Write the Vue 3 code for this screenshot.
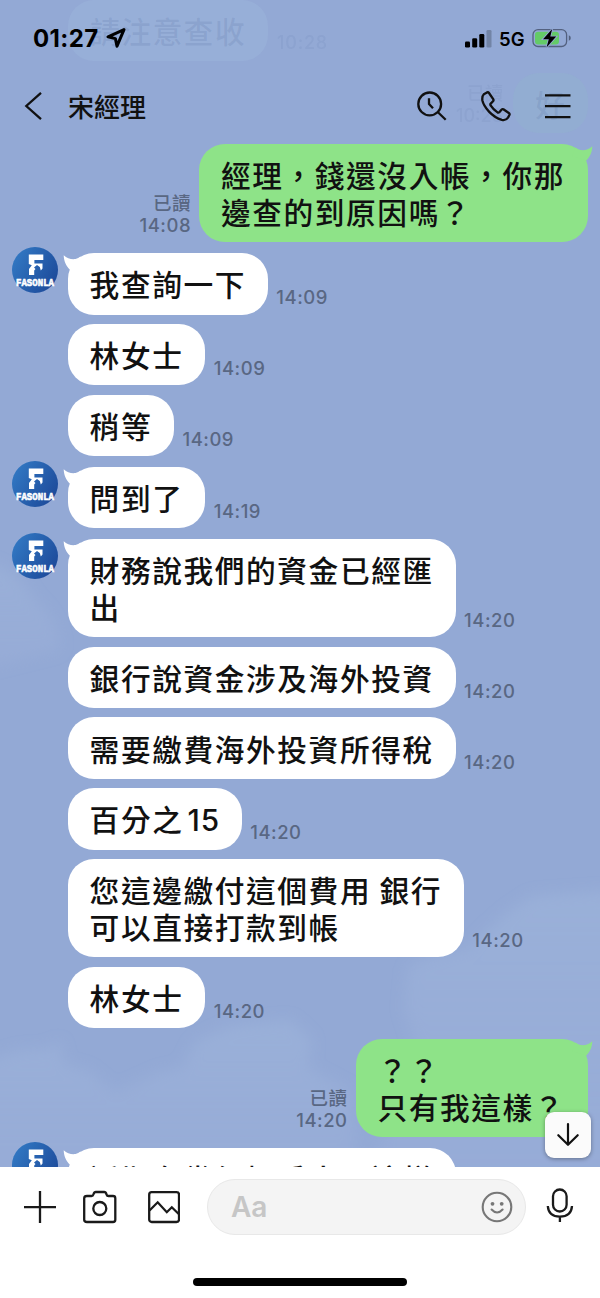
<script setup>
const messages = [
  { side: 'out', lines: ['經理，錢還沒入帳，你那', '邊查的到原因嗎？'], time: '14:08', first: true },
  { side: 'in', lines: ['我查詢一下'], time: '14:09', first: true },
  { side: 'in', lines: ['林女士'], time: '14:09' },
  { side: 'in', lines: ['稍等'], time: '14:09' },
  { side: 'in', lines: ['問到了'], time: '14:19', first: true },
  { side: 'in', lines: ['財務說我們的資金已經匯', '出'], time: '14:20', first: true },
  { side: 'in', lines: ['銀行說資金涉及海外投資'], time: '14:20' },
  { side: 'in', lines: ['需要繳費海外投資所得稅'], time: '14:20' },
  { side: 'in', lines: ['百分之'], digits: '15', time: '14:20' },
  { side: 'in', lines: ['您這邊繳付這個費用 銀行', '可以直接打款到帳'], time: '14:20' },
  { side: 'in', lines: ['林女士'], time: '14:20' },
  { side: 'out', lines: ['？？', '只有我這樣？'], time: '14:20', first: true },
  { side: 'in', lines: ['近期有幾個提手出現這樣'], time: '', first: true },
]
</script>

<template>
  <div class="screen">
    <svg class="sky" viewBox="0 0 600 1167" aria-hidden="true">
      <defs>
        <filter id="soft" x="-20%" y="-20%" width="140%" height="140%"><feGaussianBlur stdDeviation="7" /></filter>
        <linearGradient id="haze" x1="0" y1="0" x2="0" y2="1">
          <stop offset="0" stop-color="#a0b7dc" stop-opacity=".5" />
          <stop offset="1" stop-color="#a0b2dc" stop-opacity=".25" />
        </linearGradient>
      </defs>
      <g filter="url(#soft)" fill="url(#haze)">
        <path d="M-20 1062 L20 1050 L48 1049 L60 1041 L64 1064 L88 1070 L115 1092 L160 1072 L182 1068 L195 1042 L230 1026 L290 1020 L312 1040 L308 1068 L350 1090 L360 1190 H-20Z" />
        <path d="M408 968 L425 958 L470 948 L490 928 L508 912 L532 896 L620 890 V1190 H360 L420 1060 L404 1010Z" />
        <path d="M-20 560 Q20 570 35 600 Q60 620 60 650 L-20 670Z" />
      </g>
    </svg>

    <header class="header">
      <div class="ghost ghost-in">請注意查收</div>
      <div class="ghost ghost-in-time">10:28</div>
      <div class="ghost ghost-meta">已讀<br />10:28</div>
      <div class="ghost ghost-out">好</div>

      <div class="status">
        <span class="clock">01:27</span>
        <svg class="locate" width="22" height="22" viewBox="0 0 22 22">
          <path d="M19 2.6 L3 9.8 L10.4 11.6 L12 19.2 Z" fill="none" stroke="#000" stroke-width="3" stroke-linejoin="round" />
        </svg>
        <svg class="signal" width="27" height="18" viewBox="0 0 27 18">
          <rect x="0" y="11.4" width="5" height="6.2" rx="1.3" />
          <rect x="7.2" y="8.3" width="5" height="9.3" rx="1.3" />
          <rect x="14.3" y="4" width="5" height="13.6" rx="1.3" />
          <rect x="21.5" y="0" width="5" height="17.6" rx="1.3" opacity=".22" />
        </svg>
        <span class="network">5G</span>
        <svg class="battery" width="40" height="22" viewBox="0 0 40 22">
          <rect x="1" y="2.7" width="33.6" height="16.8" rx="5" fill="none" stroke="#53617f" stroke-width="1.3" />
          <path d="M36.8 8.2 Q38.8 9 38.8 11 Q38.8 13 36.8 13.8Z" fill="#53617f" />
          <rect x="3" y="4.7" width="24" height="12.8" rx="3.2" fill="#64cb67" />
          <path d="M20.2 2 L11 12.2 H16.8 L14.5 20.4 L24.2 9.6 H18.3Z" fill="#000" stroke="#93a9d5" stroke-width="1.8" paint-order="stroke" />
        </svg>
      </div>

      <div class="nav">
        <svg class="back" width="19" height="30" viewBox="0 0 19 30">
          <path d="M17 1.8 L2.3 15 L17 28.2" fill="none" stroke="#111" stroke-width="2.3" />
        </svg>
        <h1 class="title">宋經理</h1>
        <svg class="act search" width="30" height="30" viewBox="0 0 30 30">
          <circle cx="12.7" cy="12.9" r="11.4" />
          <path d="M12 7.2 V13 L16 17.2 M20.7 21 L28.7 28.8" />
        </svg>
        <svg class="act phone" width="30" height="31" viewBox="0 0 30 31">
          <path d="M2.8 3.3 L6 1.4 Q7.2.8 8 2 L12.2 8.2 Q12.9 9.3 12 10.2 L9.5 12.9 Q9.1 13.6 9.6 14.4 Q12.3 18.6 16.5 21.4 Q17.5 22 18.3 21.2 L20.7 18.5 Q21.4 17.8 22.4 18.3 L27.8 22 Q29 22.8 28.4 24 L27 26.6 Q24.8 29.8 20.8 28.8 Q13.8 26.8 8 20.6 Q2.4 14.4 1.4 9.5 Q.8 5.4 2.8 3.3Z" />
        </svg>
        <svg class="act menu" width="26" height="26" viewBox="0 0 26 26">
          <path d="M0 2.3 H25.5 M0 13.2 H25.5 M0 24.2 H25.5" />
        </svg>
      </div>
    </header>

    <main class="chat">
      <div v-for="(m, i) in messages" :key="i" class="row" :class="[m.side, { first: m.first }]">
        <div v-if="m.side === 'in'" class="gutter">
          <svg v-if="m.first" class="avatar" width="46" height="46" viewBox="0 0 46 46">
            <defs>
              <linearGradient id="disc" x1="0" y1=".2" x2="1" y2=".8">
                <stop offset="0" stop-color="#3279c4" />
                <stop offset="1" stop-color="#1c4898" />
              </linearGradient>
            </defs>
            <circle cx="23" cy="23" r="23" fill="url(#disc)" />
            <path d="M16.8 7.5 H31.3 V13 H22.4 V16.4 H30.5 V21.5 L28.8 23.5 L27.8 20 L25 18 L22 20.5 L23.5 22 L22.2 23.5 V28 H17 V22 L19.8 18.2 L16.8 17Z" fill="#fff" />
            <text x="23" y="38.5" text-anchor="middle" textLength="38" lengthAdjust="spacingAndGlyphs" class="brand">FASONLA</text>
          </svg>
        </div>
        <div v-else class="meta out-meta"><span>已讀</span><span>{{ m.time }}</span></div>
        <div class="bubble">
          <svg v-if="m.first" class="tail" width="22" height="20" viewBox="0 0 22 20">
            <path d="M.7 2.2 C4 5.5 8.5 6.6 12.6 6 C14.5 5.6 16 4.6 17.5 3.6 L21 12 L6.6 16.5 C3.2 12.5 .9 8.5 .7 2.2Z" />
          </svg>
          <div v-for="l in m.lines" :key="l" class="line">{{ l }}<span v-if="m.digits" class="digits">{{ m.digits }}</span></div>
        </div>
        <div v-if="m.side === 'in'" class="meta">{{ m.time }}</div>
      </div>
      <button class="jump" type="button">
        <svg width="24" height="26" viewBox="0 0 24 26">
          <path d="M12 2 V22.5 M2.3 13.2 L12 22.8 L21.7 13.2" fill="none" stroke="#111" stroke-width="2.2" stroke-linecap="round" stroke-linejoin="round" />
        </svg>
      </button>
    </main>

    <footer class="composer">
      <div class="tools">
        <svg class="tool plus" width="32" height="34" viewBox="0 0 32 34"><path d="M16 1 V33 M0 17.2 H32" /></svg>
        <svg class="tool camera" width="34" height="34" viewBox="0 0 34 34">
          <path d="M4 6 H8.5 Q10 6 10.5 4.3 Q11.2 2 12.8 2 H21.2 Q22.8 2 23.5 4.3 Q24 6 25.5 6 H30 Q32.3 6 32.3 8.3 V29.7 Q32.3 32 30 32 H4 Q1.2 32 1.2 29.7 V8.3 Q1.2 6 4 6Z" />
          <circle cx="16.8" cy="18.5" r="6.5" />
        </svg>
        <svg class="tool picture" width="32" height="34" viewBox="0 0 32 34">
          <rect x="1.2" y="2.2" width="29.8" height="29.8" rx="2.5" />
          <path d="M1.5 20.5 L9.7 12.3 L18.8 22.2 L23.8 17.3 L31 24.3" />
        </svg>
        <div class="field">
          <span class="hint">Aa</span>
          <svg width="32" height="32" viewBox="0 0 32 32">
            <circle cx="16" cy="16" r="14.3" fill="none" stroke="#777" stroke-width="2.1" />
            <circle cx="11.5" cy="12.8" r="1.9" fill="#777" /><circle cx="20.7" cy="12.8" r="1.9" fill="#777" />
            <path d="M10.6 18.5 Q16.1 24.5 21.6 18.5" fill="none" stroke="#777" stroke-width="2.1" stroke-linecap="round" />
          </svg>
        </div>
        <svg class="tool mic" width="28" height="35" viewBox="0 0 28 35">
          <rect x="7" y="1.5" width="13.6" height="22" rx="6.8" />
          <path d="M1.8 18 Q2.5 28.7 13.9 28.7 Q25.3 28.7 26 18 M13.9 28.7 V34" />
        </svg>
      </div>
      <div class="home"></div>
    </footer>
  </div>
</template>

<style>
body {
  margin: 0;
}
</style>

<style scoped>
.screen {
  position: relative;
  display: flex;
  flex-direction: column;
  width: 600px;
  height: 1298px;
  overflow: hidden;
  background: #93a9d5;
  color: #111;
  font-family: Inter, "Noto Sans CJK TC", sans-serif;
}
.sky {
  position: absolute;
  top: 0;
  left: 0;
  width: 600px;
  height: 1167px;
}
.header {
  position: relative;
  flex: none;
  height: 144px;
}
.ghost {
  position: absolute;
  color: rgba(60, 85, 140, 0.13);
  font-weight: 500;
}
.ghost-in {
  top: 0;
  left: 68px;
  width: 178px;
  height: 61px;
  padding-left: 22px;
  border-radius: 26px;
  background: rgba(170, 200, 230, 0.2);
  font: 500 30px/60px "Noto Sans CJK TC", sans-serif;
  letter-spacing: 1.2px;
}
.ghost-in-time {
  top: 32px;
  left: 277px;
  font-size: 18px;
  letter-spacing: 0.8px;
  opacity: 0.6;
}
.ghost-meta {
  top: 83px;
  left: 440px;
  width: 63px;
  font-size: 18px;
  line-height: 22px;
  text-align: right;
  opacity: 0.55;
}
.ghost-out {
  top: 73px;
  left: 513px;
  width: 53px;
  height: 60px;
  padding-left: 22px;
  border-radius: 26px;
  background: rgba(142, 200, 190, 0.14);
  font: 500 30px/60px "Noto Sans CJK TC", sans-serif;
}
.status {
  position: relative;
  display: flex;
  align-items: center;
  height: 76px;
  padding-left: 33px;
}
.clock {
  width: 72px;
  color: #000;
  font-size: 24px;
  font-weight: 700;
  letter-spacing: 0.4px;
}
.signal {
  margin: 2px 0 0 338px;
}
.network {
  width: 33px;
  margin: 2px 0 0 7px;
  color: #000;
  font-size: 18.5px;
  font-weight: 600;
}
.nav {
  position: relative;
  display: flex;
  align-items: center;
  height: 60px;
  padding-left: 24px;
}
.title {
  width: 325px;
  margin: 0 0 0 25px;
  font: 500 26px/40px "Noto Sans CJK TC", sans-serif;
}
.act {
  fill: none;
  stroke: #111;
  stroke-width: 2.3;
  stroke-linejoin: round;
}
.search {
  margin-left: 24px;
}
.phone {
  margin-left: 34px;
}
.menu {
  margin-left: 34px;
}
.chat {
  position: relative;
  flex: none;
  height: 1023px;
  overflow: hidden;
}
.row {
  display: flex;
  align-items: flex-end;
  margin-top: 9.35px;
}
.row.first {
  margin-top: 10.9px;
}
.row:first-child {
  margin-top: 0;
}
.out {
  justify-content: flex-end;
  padding-right: 12.3px;
}
.gutter {
  flex: none;
  align-self: flex-start;
  width: 56px;
  height: 46px;
  margin: -6px 0 -40px;
  padding-left: 12px;
}
.avatar {
  display: block;
}
.brand {
  fill: #fff;
  stroke: #fff;
  stroke-width: 0.6;
  font: 700 11px "Liberation Mono", monospace;
}
.bubble {
  position: relative;
  padding: 13.1px 22px 11.4px 21.6px;
  border-radius: 26px;
  background: #fff;
  font-family: "Noto Sans CJK TC", sans-serif;
  font-size: 29.7px;
  font-weight: 500;
  letter-spacing: 1.6px;
}
.digits {
  margin-left: 4px;
  font-family: Inter, sans-serif;
  letter-spacing: 0.9px;
}
.line {
  height: 36.9px;
  line-height: 36.9px;
  white-space: pre;
}
.out .bubble {
  padding-right: 22.6px;
  background: #8ee388;
}
.tail {
  position: absolute;
  top: 0;
  left: -5px;
  fill: #fff;
}
.out .tail {
  right: -5px;
  left: auto;
  transform: scaleX(-1);
  fill: #8ee388;
}
.meta {
  margin: 0 0 6.2px 8.3px;
  color: #596783;
  font-size: 18.5px;
  font-weight: 500;
  line-height: 22px;
  letter-spacing: 0.5px;
}
.out-meta {
  display: flex;
  flex-direction: column;
  align-items: flex-end;
  margin: 0 8.3px 6px 0;
}
.jump {
  position: absolute;
  top: 968px;
  right: 9px;
  display: grid;
  place-items: center;
  width: 46px;
  height: 46px;
  padding: 0;
  border: 0;
  border-radius: 9px;
  background: #fbfbfb;
  box-shadow: 0 1px 4px rgba(0, 0, 0, 0.35);
}
.composer {
  position: relative;
  flex: 1;
  background: #fff;
}
.tools {
  display: flex;
  align-items: center;
  height: 80px;
  padding-left: 24px;
}
.tool {
  flex: none;
  fill: none;
  stroke: #1a1a1a;
  stroke-width: 2.3;
}
.camera {
  margin-left: 27px;
}
.picture {
  margin-left: 31px;
}
.field {
  box-sizing: border-box;
  display: flex;
  align-items: center;
  justify-content: space-between;
  width: 319px;
  height: 56px;
  margin-left: 27px;
  padding: 0 12px 1px 23px;
  border: 1px solid #e8e8e8;
  border-radius: 28px;
  background: #f4f4f4;
}
.hint {
  color: #c6c6c6;
  font-size: 28px;
  font-weight: 600;
}
.mic {
  margin: -4px 0 0 20px;
}
.home {
  width: 214px;
  height: 8px;
  margin: 31px auto 0;
  border-radius: 4px;
  background: #000;
}
</style>
